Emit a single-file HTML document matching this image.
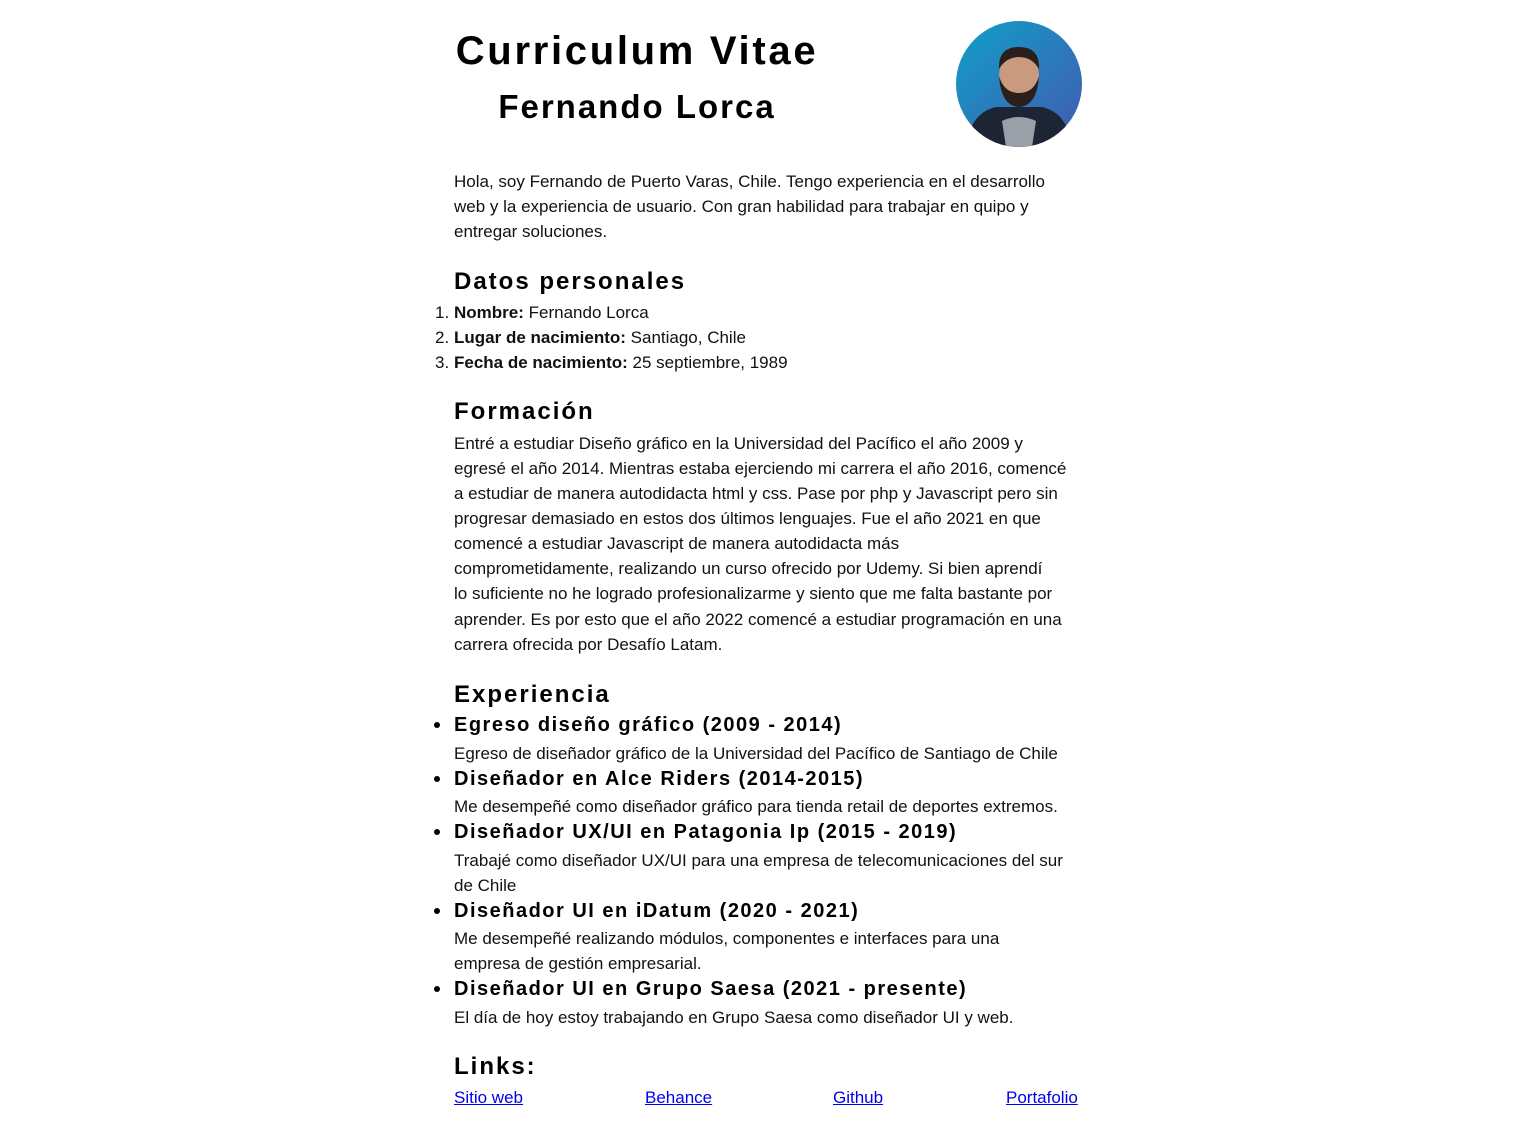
<!DOCTYPE html>
<html><head><meta charset="utf-8"><style>
body{margin:0;background:#fff;width:1536px;height:1130px;position:relative;font-family:"Liberation Sans",Arial,sans-serif;color:#111;overflow:hidden}
.l{position:absolute;left:454px;white-space:nowrap;font-size:17px;line-height:25px;height:25px;margin-top:1px}
.h{position:absolute;left:454px;white-space:nowrap;font-weight:bold;letter-spacing:2px;color:#000}
.h2{font-size:24px;line-height:30px}
.h3{font-size:20px;line-height:26px;letter-spacing:1.5px;margin-top:0px}
.n{position:absolute;left:435px;font-size:17px;line-height:25px;margin-top:1px}
.b{position:absolute;left:434px;width:6px;height:6px;border-radius:50%;background:#000}
a{color:#0000ee;text-decoration:underline;position:absolute;font-size:17px;line-height:25px;white-space:nowrap;margin-top:1px}
</style></head><body>
<div class="h" style="left:450px;width:374px;text-align:center;top:26px;font-size:40px;line-height:50px;letter-spacing:2.7px">Curriculum Vitae</div>
<div class="h" style="left:454px;width:366px;text-align:center;top:86px;font-size:33px;line-height:42px;letter-spacing:2px">Fernando Lorca</div>
<svg style="position:absolute;left:956px;top:21px" width="126" height="126" viewBox="0 0 126 126">
<defs><linearGradient id="g" x1="0" y1="0" x2="1" y2="1"><stop offset="0" stop-color="#0fa0c8"/><stop offset="1" stop-color="#4458b0"/></linearGradient><clipPath id="c"><circle cx="63" cy="63" r="63"/></clipPath></defs>
<circle cx="63" cy="63" r="63" fill="url(#g)"/>
<g clip-path="url(#c)">
<path d="M10 126 Q14 92 40 86 L86 86 Q112 92 116 126Z" fill="#1d2433"/>
<path d="M46 100 Q63 92 80 100 L76 126 L50 126Z" fill="#9aa0a8"/>
<ellipse cx="63" cy="55" rx="20" ry="25" fill="#c99a80"/>
<path d="M43 55 Q45 85 63 86 Q81 85 83 55 Q78 72 63 72 Q48 72 43 55Z" fill="#2a1f1a"/>
<path d="M43 48 Q42 26 63 26 Q84 26 83 48 Q76 36 63 36 Q50 36 43 48Z" fill="#2a1f1a"/>
</g></svg>
<div class="l" style="top:168px">Hola, soy Fernando de Puerto Varas, Chile. Tengo experiencia en el desarrollo</div>
<div class="l" style="top:193px">web y la experiencia de usuario. Con gran habilidad para trabajar en quipo y</div>
<div class="l" style="top:218px">entregar soluciones.</div>
<div class="h h2" style="top:267px">Datos personales</div>
<div class="n" style="top:299px">1.</div><div class="l" style="top:299px"><b>Nombre:</b> Fernando Lorca</div>
<div class="n" style="top:324px">2.</div><div class="l" style="top:324px"><b>Lugar de nacimiento:</b> Santiago, Chile</div>
<div class="n" style="top:349px">3.</div><div class="l" style="top:349px"><b>Fecha de nacimiento:</b> 25 septiembre, 1989</div>
<div class="h h2" style="top:397px">Formación</div>
<div class="l" style="top:430px">Entré a estudiar Diseño gráfico en la Universidad del Pacífico el año 2009 y</div>
<div class="l" style="top:455px">egresé el año 2014. Mientras estaba ejerciendo mi carrera el año 2016, comencé</div>
<div class="l" style="top:480px">a estudiar de manera autodidacta html y css. Pase por php y Javascript pero sin</div>
<div class="l" style="top:505px">progresar demasiado en estos dos últimos lenguajes. Fue el año 2021 en que</div>
<div class="l" style="top:530px">comencé a estudiar Javascript de manera autodidacta más</div>
<div class="l" style="top:555px">comprometidamente, realizando un curso ofrecido por Udemy. Si bien aprendí</div>
<div class="l" style="top:580px">lo suficiente no he logrado profesionalizarme y siento que me falta bastante por</div>
<div class="l" style="top:606px">aprender. Es por esto que el año 2022 comencé a estudiar programación en una</div>
<div class="l" style="top:631px">carrera ofrecida por Desafío Latam.</div>
<div class="h h2" style="top:680px">Experiencia</div>
<div class="b" style="top:722px"></div><div class="h h3" style="top:712px">Egreso diseño gráfico (2009 - 2014)</div>
<div class="l" style="top:740px">Egreso de diseñador gráfico de la Universidad del Pacífico de Santiago de Chile</div>
<div class="b" style="top:776px"></div><div class="h h3" style="top:766px">Diseñador en Alce Riders (2014-2015)</div>
<div class="l" style="top:793px">Me desempeñé como diseñador gráfico para tienda retail de deportes extremos.</div>
<div class="b" style="top:829px"></div><div class="h h3" style="top:819px">Diseñador UX/UI en Patagonia Ip (2015 - 2019)</div>
<div class="l" style="top:847px">Trabajé como diseñador UX/UI para una empresa de telecomunicaciones del sur</div>
<div class="l" style="top:872px">de Chile</div>
<div class="b" style="top:908px"></div><div class="h h3" style="top:898px">Diseñador UI en iDatum (2020 - 2021)</div>
<div class="l" style="top:925px">Me desempeñé realizando módulos, componentes e interfaces para una</div>
<div class="l" style="top:950px">empresa de gestión empresarial.</div>
<div class="b" style="top:986px"></div><div class="h h3" style="top:976px">Diseñador UI en Grupo Saesa (2021 - presente)</div>
<div class="l" style="top:1004px">El día de hoy estoy trabajando en Grupo Saesa como diseñador UI y web.</div>
<div class="h h2" style="top:1052px">Links:</div>
<a style="left:454px;top:1084px">Sitio web</a>
<a style="left:645px;top:1084px">Behance</a>
<a style="left:833px;top:1084px">Github</a>
<a style="left:1006px;top:1084px">Portafolio</a>
</body></html>
